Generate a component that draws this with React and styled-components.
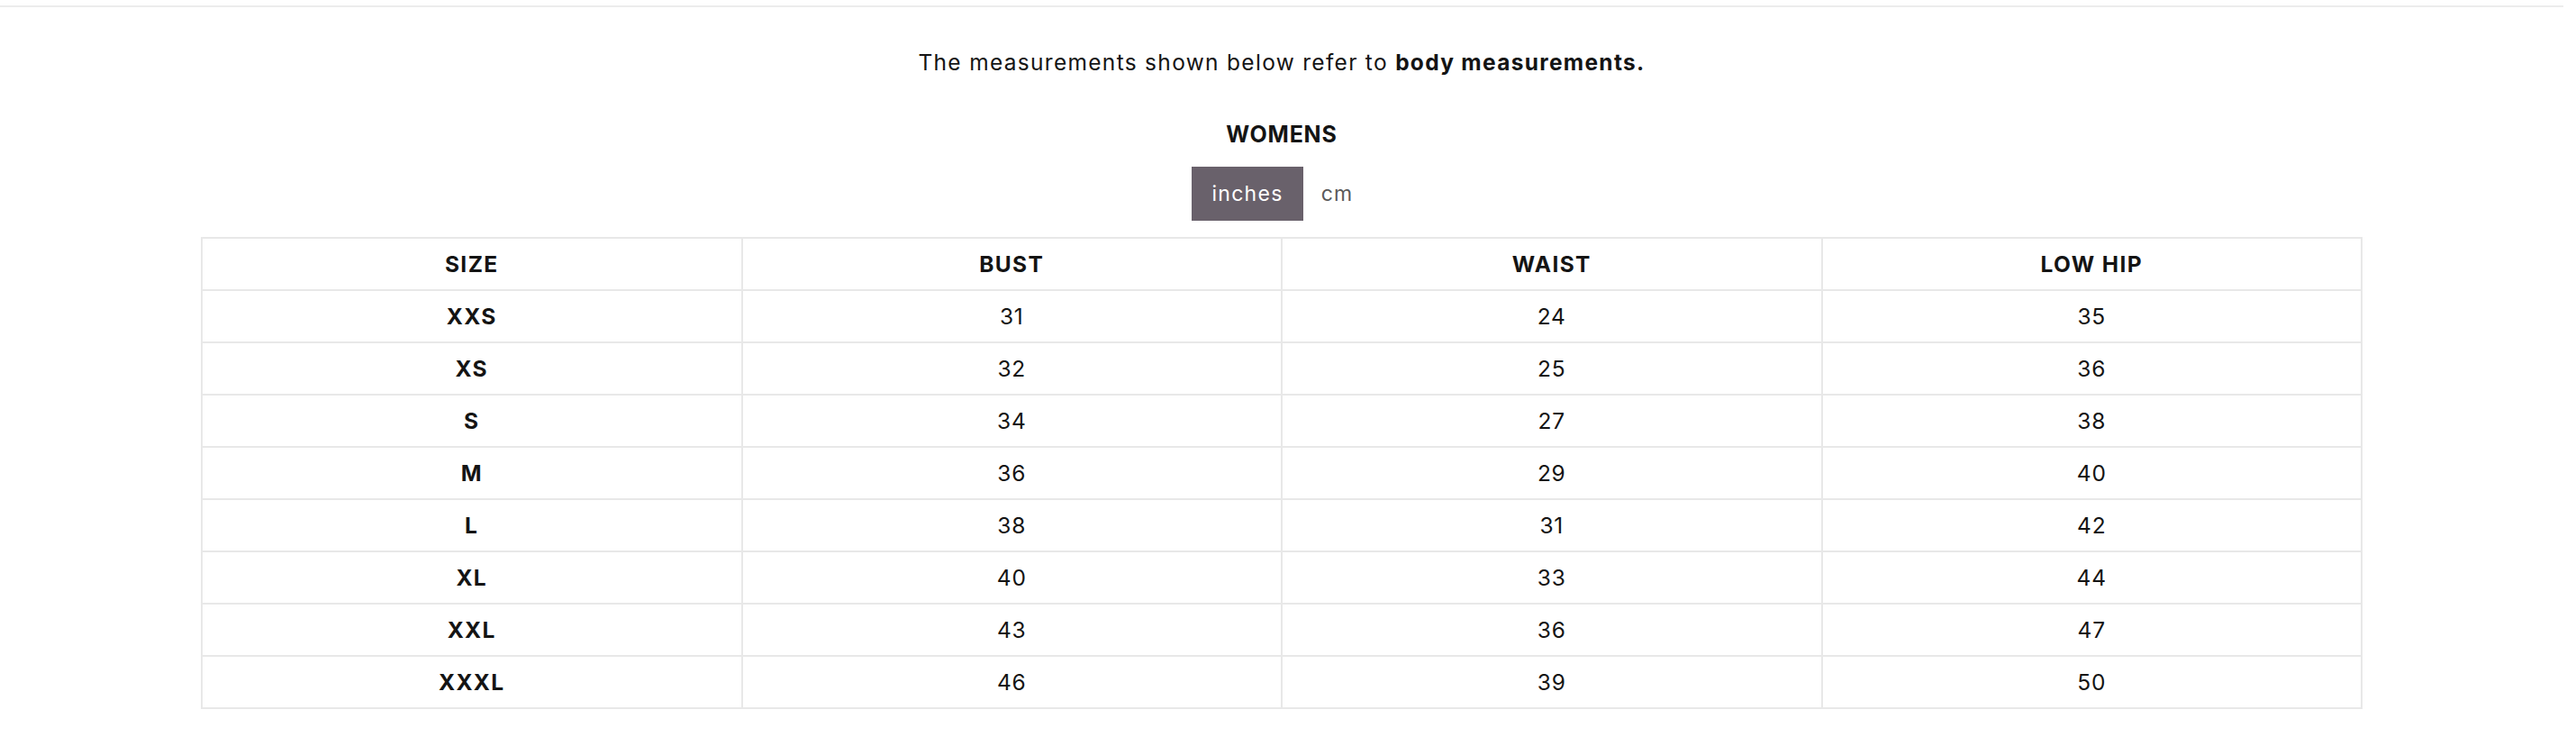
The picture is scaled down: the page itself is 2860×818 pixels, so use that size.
import React, { useState } from 'react'
import styled, { createGlobalStyle } from 'styled-components'

const GlobalStyle = createGlobalStyle`
  html, body {
    margin: 0;
    padding: 0;
    background: #fff;
  }
  body {
    font-family: Inter, "Open Sans", sans-serif;
    color: #141414;
  }
`

const Page = styled.div`
  width: 2846px;
  border-top: 2px solid #ececec;
  margin-top: 6px;
  display: flex;
  flex-direction: column;
  align-items: center;
`

const Intro = styled.p`
  margin: 45px 0 0;
  font-size: 24.5px;
  line-height: 32px;
  letter-spacing: 1.3px;
  b {
    font-weight: 700;
  }
`

const Title = styled.h3`
  margin: 48px 0 0;
  font-size: 25px;
  line-height: 32px;
  font-weight: 700;
  letter-spacing: 0.8px;
`

const Toggle = styled.div`
  display: flex;
  align-items: center;
  margin-top: 20px;
`

const Unit = styled.button`
  border: 0;
  height: 60px;
  padding: 0 ${p => (p.active ? 22 : 20)}px;
  font-family: inherit;
  font-size: 23px;
  letter-spacing: 1.3px;
  cursor: pointer;
  background: ${p => (p.active ? '#69616b' : 'transparent')};
  color: ${p => (p.active ? '#fff' : '#5a5a5a')};
`

const Table = styled.table`
  margin-top: 18px;
  width: 2400px;
  border-collapse: collapse;
  table-layout: fixed;
  text-align: center;
  font-size: 24.5px;
  letter-spacing: 0.8px;
`

const Cell = styled.td`
  border: 2px solid #e8e8e8;
  height: 56px;
  padding: 0;
  font-weight: ${p => (p.bold ? 700 : 400)};
  letter-spacing: ${p => (p.bold ? 1.4 : 0.8)}px;
`

const rows = [
  ['XXS', 31, 24, 35],
  ['XS', 32, 25, 36],
  ['S', 34, 27, 38],
  ['M', 36, 29, 40],
  ['L', 38, 31, 42],
  ['XL', 40, 33, 44],
  ['XXL', 43, 36, 47],
  ['XXXL', 46, 39, 50],
]

export default () => {
  const [unit, setUnit] = useState('inches')
  const conv = v => (unit == 'cm' ? Math.round(v * 2.54) : v)
  return (
    <>
      <GlobalStyle />
      <Page>
        <Intro>The measurements shown below refer to <b>body measurements.</b></Intro>
        <Title>WOMENS</Title>
        <Toggle>
          <Unit active={unit == 'inches'} onClick={() => setUnit('inches')}>inches</Unit>
          <Unit active={unit == 'cm'} onClick={() => setUnit('cm')}>cm</Unit>
        </Toggle>
        <Table>
          <tbody>
            <tr>
              {['SIZE', 'BUST', 'WAIST', 'LOW HIP'].map(h => <Cell key={h} bold>{h}</Cell>)}
            </tr>
            {rows.map(r => (
              <tr key={r[0]}>
                <Cell bold>{r[0]}</Cell>
                <Cell>{conv(r[1])}</Cell>
                <Cell>{conv(r[2])}</Cell>
                <Cell>{conv(r[3])}</Cell>
              </tr>
            ))}
          </tbody>
        </Table>
      </Page>
    </>
  )
}
